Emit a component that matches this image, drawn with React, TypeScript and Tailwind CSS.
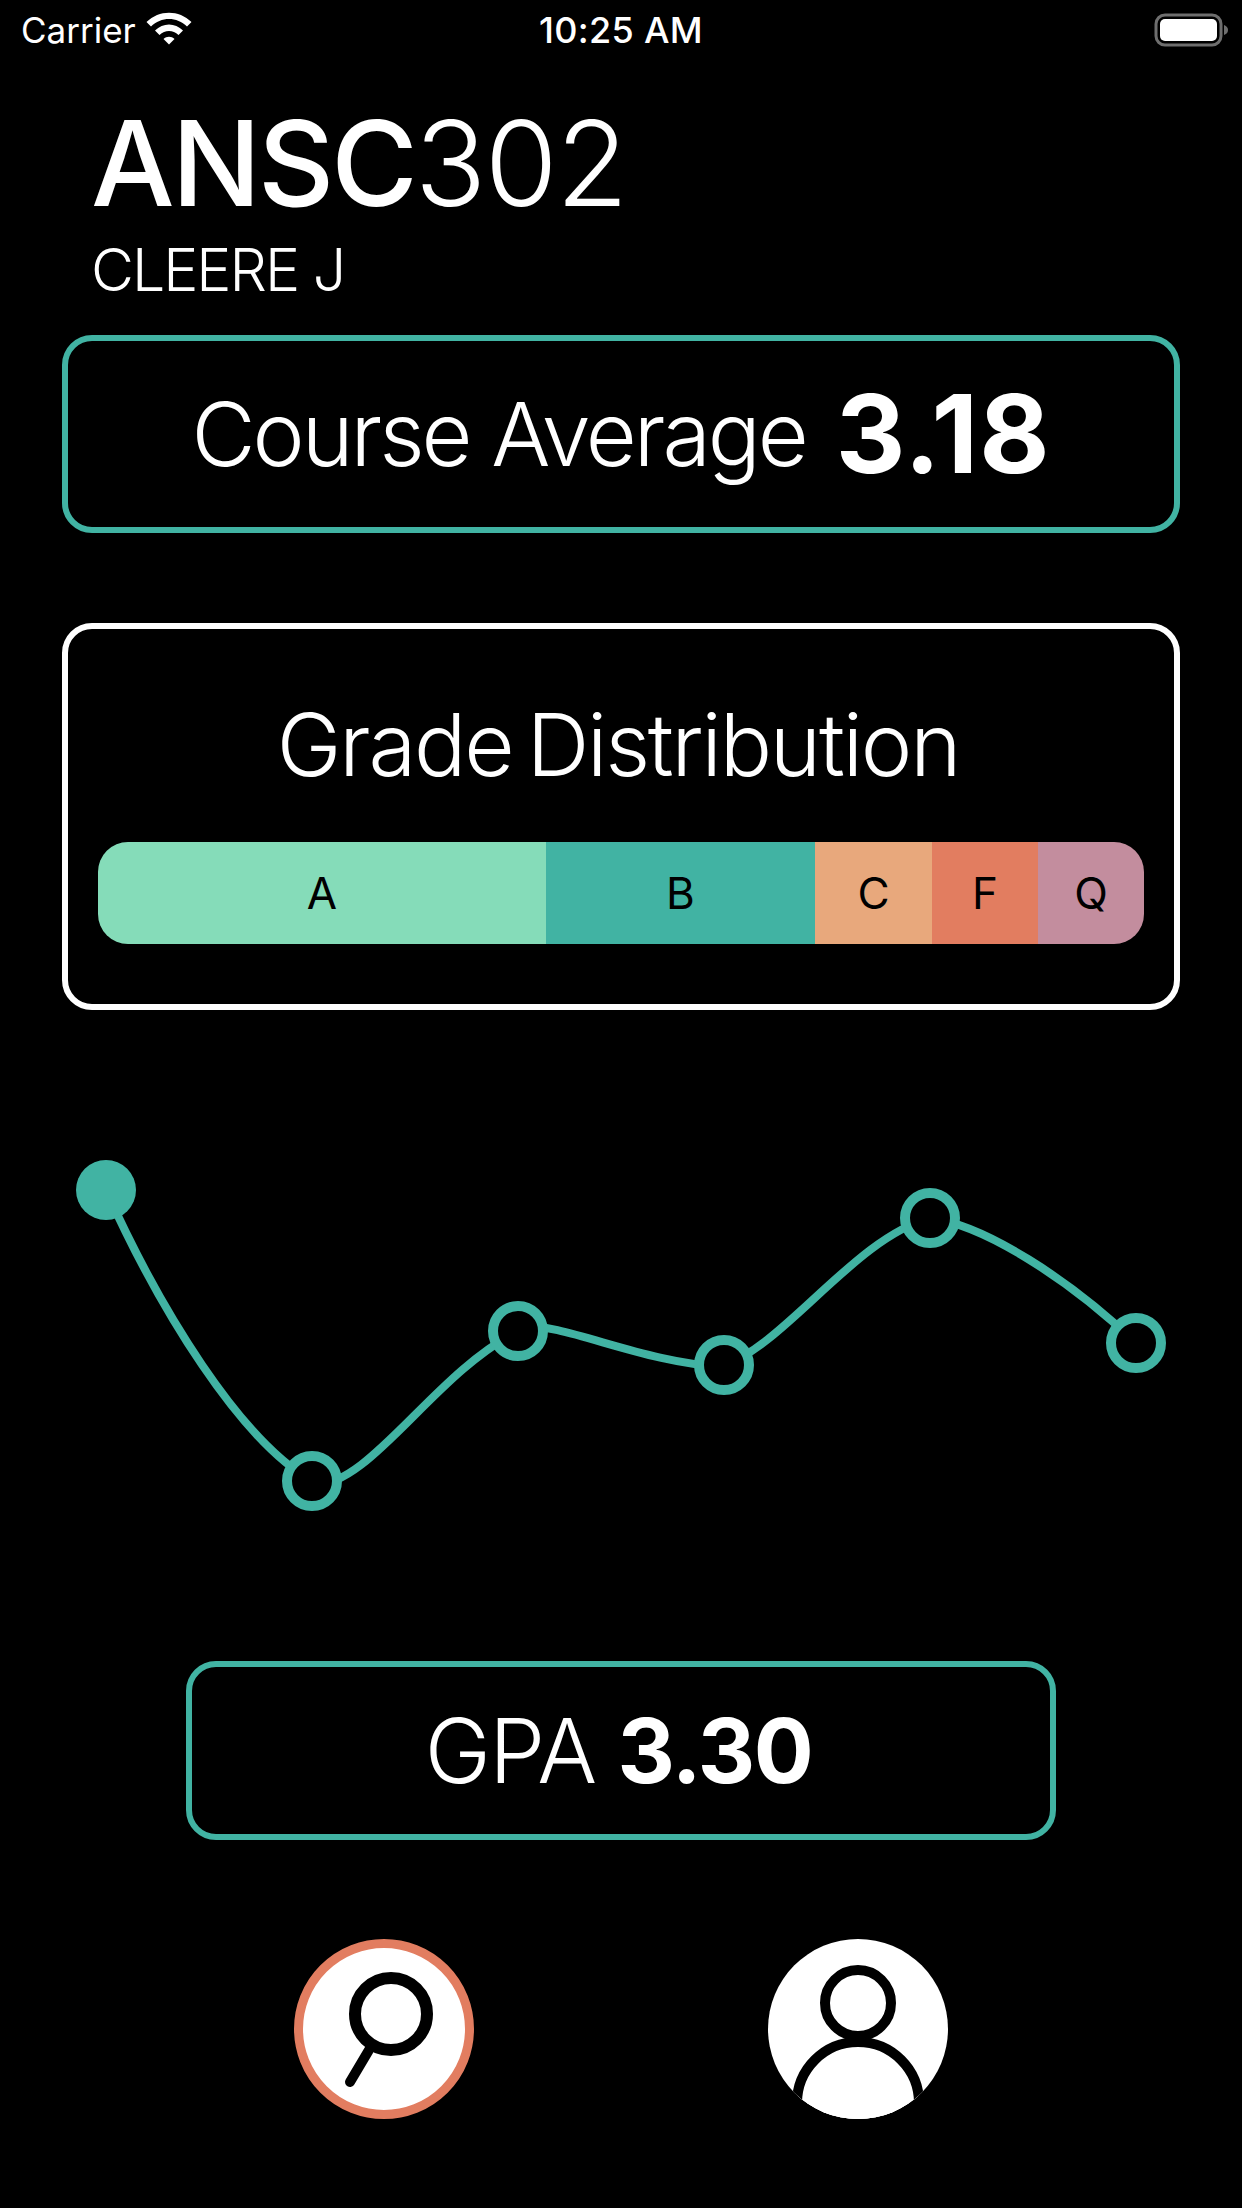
const teal = '#41b3a3';

// trend points, in chart coordinates (chart starts at y=1150 on the page)
const points = [
    { x: 106, y: 40 },
    { x: 312, y: 331 },
    { x: 518, y: 181 },
    { x: 724, y: 215 },
    { x: 930, y: 68 },
    { x: 1136, y: 193 },
];

const segments = [
    { label: 'A', width: 'w-[448px]', color: 'bg-[#85dcb9]' },
    { label: 'B', width: 'w-[269px]', color: 'bg-[#41b3a3]' },
    { label: 'C', width: 'w-[117px]', color: 'bg-[#e8a87c]' },
    { label: 'F', width: 'w-[106px]', color: 'bg-[#e27d60]' },
    { label: 'Q', width: 'w-[106px]', color: 'bg-[#c38d9e]' },
];

function StatusBar() {
    return (
        <div className="h-[60px] relative flex items-center justify-between pl-[21px] pr-[12px] text-white">
            <div className="flex items-center gap-[10px]">
                <span className="text-[35px] leading-none font-normal">Carrier</span>
                <svg width="46" height="34" viewBox="0 0 46 34" className="mb-[4px]">
                    <path d="M0.5 11 C13 -1.5 33 -1.5 45.5 11 L41 15.5 C31 5.5 15 5.5 5 15.5 Z" fill="white" />
                    <path d="M9 19.5 C17 11.5 29 11.5 37 19.5 L32.5 24 C27 18.5 19 18.5 13.5 24 Z" fill="white" />
                    <path d="M17.5 28 C20.5 25 25.5 25 28.5 28 L23 33.5 Z" fill="white" />
                </svg>
            </div>
            <span className="absolute left-0 right-0 text-center text-[36px] leading-none font-medium tracking-[0.3px]">10:25 AM</span>
            <svg width="76" height="34" viewBox="0 0 76 34">
                <rect x="2" y="2" width="65" height="30" rx="9" fill="none" stroke="#6e6e6e" strokeWidth="3" />
                <rect x="6" y="6" width="57" height="22" rx="5" fill="white" />
                <path d="M70 12 C73 13 74 15 74 17 C74 19 73 21 70 22 Z" fill="#6e6e6e" />
            </svg>
        </div>
    );
}

function TrendChart() {
    return (
        <svg width="1242" height="370" viewBox="0 0 1242 370" className="block">
            <path
                d="M106 40 C160 160 240 290 312 331 M312 336 C372 335 432 225 518 181 M518 175 C570 175 640 212 724 217 M724 215 C785 195 855 88 930 68 M930 68 C985 75 1070 130 1136 193"
                fill="none"
                stroke={teal}
                strokeWidth="8"
            />
            {points.map((p, i) => (
                <circle
                    key={p.x}
                    cx={p.x}
                    cy={p.y}
                    r={i === 0 ? 30 : 25}
                    fill={i === 0 ? teal : 'black'}
                    stroke={i === 0 ? 'none' : teal}
                    strokeWidth="10"
                />
            ))}
        </svg>
    );
}

function SearchIcon() {
    return (
        <svg width="162" height="162" viewBox="0 0 162 162" className="block">
            <circle cx="88" cy="66" r="36" fill="none" stroke="black" strokeWidth="12" />
            <path d="M66 102 L47 134" stroke="black" strokeWidth="10" strokeLinecap="round" />
        </svg>
    );
}

function ProfileIcon() {
    return (
        <svg width="180" height="180" viewBox="0 0 180 180" className="block">
            <circle cx="90" cy="90" r="90" fill="white" />
            <clipPath id="profile-clip">
                <circle cx="90" cy="90" r="90" />
            </clipPath>
            <g clipPath="url(#profile-clip)">
                <circle cx="90" cy="164" r="61" fill="white" stroke="black" strokeWidth="10" />
                <rect x="0" y="164" width="180" height="16" fill="white" />
                <circle cx="90" cy="64" r="33" fill="white" stroke="black" strokeWidth="10" />
            </g>
        </svg>
    );
}

export default function App() {
    return (
        <div className="w-[1242px] h-[2208px] bg-black text-white overflow-hidden font-['Inter',sans-serif]">
            <StatusBar />

            <div className="pl-[91px] mt-[38px]">
                <h1 className="text-[118px] leading-[130px] tracking-[-3px] font-medium">
                    ANSC<span className="font-light tracking-[-1.5px]">302</span>
                </h1>
                <p className="text-[59px] leading-[70px] font-light tracking-[-2px] mt-[7px]">CLEERE J</p>
            </div>

            <div className="mx-[62px] mt-[30px] w-[1118px] h-[198px] border-[6px] border-[#41b3a3] rounded-[30px] flex items-center justify-center gap-[30px]">
                <span className="text-[88px] font-light tracking-[-3px]">Course Average</span>
                <span className="text-[108px] font-bold tracking-[1px]">3.18</span>
            </div>

            <div className="mx-[62px] mt-[90px] w-[1118px] h-[387px] border-[6px] border-white rounded-[30px] flex flex-col items-center pt-[66px]">
                <h2 className="text-[87px] leading-[100px] font-light tracking-[-2.2px] [word-spacing:-8px] pr-[6px]">Grade Distribution</h2>
                <div className="mt-[47px] w-[1046px] h-[102px] rounded-[30px] overflow-hidden flex">
                    {segments.map((s) => (
                        <div key={s.label} className={`${s.width} ${s.color} flex items-center justify-center text-black text-[44px] font-normal`}>
                            {s.label}
                        </div>
                    ))}
                </div>
            </div>

            <div className="mt-[140px]">
                <TrendChart />
            </div>

            <div className="mx-auto mt-[141px] w-[870px] h-[179px] border-[6px] border-[#41b3a3] rounded-[30px] flex items-center justify-center gap-[22px] pr-[5px]">
                <span className="text-[89px] font-light tracking-[-1.5px]">GPA</span>
                <span className="text-[89px] font-bold tracking-[-1.5px]">3.30</span>
            </div>

            <div className="mt-[99px] pl-[294px] flex gap-[294px]">
                <div className="w-[180px] h-[180px] rounded-full bg-white border-[9px] border-[#e27d60]">
                    <SearchIcon />
                </div>
                <ProfileIcon />
            </div>
        </div>
    );
}
